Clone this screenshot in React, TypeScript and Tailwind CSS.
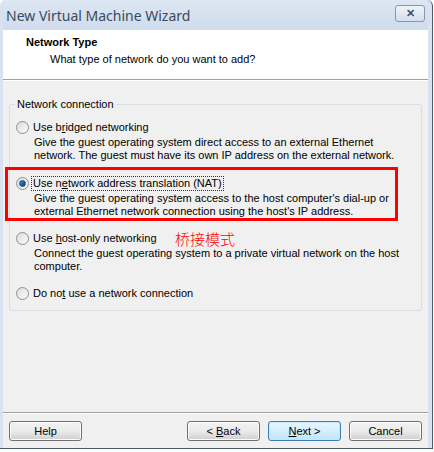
import type { ReactNode } from 'react'

const uiFont = { fontFamily: '"Liberation Sans", Arial, sans-serif' }

function Radio({ checked = false }: { checked?: boolean }) {
  return (
    <span className="flex h-[13px] w-[13px] shrink-0 items-center justify-center rounded-full border border-[#8e8f8f] bg-gradient-to-br from-[#dcdcdc] to-[#fbfbfb]">
      {checked && (
        <span className="h-[7px] w-[7px] rounded-full border border-[#1b4d7d] bg-gradient-to-br from-[#3a8fe0] to-[#0b3c6e]" />
      )}
    </span>
  )
}

function Option({
  label,
  checked,
  focused,
  lines,
}: {
  label: ReactNode
  checked?: boolean
  focused?: boolean
  lines?: string[]
}) {
  return (
    <div className="flex flex-col">
      <div className="flex h-[14px] items-center gap-[2px]">
        <Radio checked={checked} />
        <span
          className={
            focused
              ? 'whitespace-nowrap border border-dotted border-[#333] px-[1px] leading-[13px]'
              : 'whitespace-nowrap border border-transparent px-[1px] leading-[13px]'
          }
        >
          {label}
        </span>
      </div>
      {lines && (
        <div className="flex flex-col pl-[18px] pt-[2px]">
          {lines.map((line) => (
            <span key={line} className="whitespace-nowrap leading-[13px]">
              {line}
            </span>
          ))}
        </div>
      )}
    </div>
  )
}

function Button({ children, primary }: { children: ReactNode; primary?: boolean }) {
  return (
    <button
      type="button"
      className={
        primary
          ? 'flex h-[20px] w-[73px] items-center justify-center rounded-[3px] border border-[#3c7fb1] bg-gradient-to-b from-[#eaf6fd] to-[#bee6fd] text-[11px] text-black shadow-[inset_0_0_0_1px_#c5e7fa]'
          : 'flex h-[20px] w-[73px] items-center justify-center rounded-[3px] border border-[#707070] bg-gradient-to-b from-[#f2f2f2] via-[#ebebeb] to-[#cfcfcf] text-[11px] text-black shadow-[inset_0_0_0_1px_#fcfcfc]'
      }
    >
      <span className="whitespace-pre">{children}</span>
    </button>
  )
}

export default function App() {
  return (
    <div className="h-[452px] w-[434px] overflow-hidden bg-white text-[11px] text-black" style={uiFont}>
      <div className="flex h-[449px] w-[433px] flex-col rounded-t-[6px] border-r border-b border-[#4d5866] bg-[#d7e3f0] pl-[3px] pr-[4px]">
        {/* title bar */}
        <div className="flex h-[30px] shrink-0 items-center justify-between bg-gradient-to-b from-[#dce7f3] to-[#cfdcec] pl-[3px] pr-[3px]">
          <span className="text-[14px] text-[#3b4a5c]" style={{ fontFamily: '"Noto Sans", sans-serif' }}>
            New Virtual Machine Wizard
          </span>
          <span className="mb-[3px] flex h-[17px] w-[30px] items-center justify-center rounded-[3px] border border-[#8397ae] bg-gradient-to-b from-[#eef3f9] to-[#d4e0ee] text-[11px] font-bold leading-none text-[#44546a]">
            ✕
          </span>
        </div>

        {/* header */}
        <div className="flex h-[50px] shrink-0 flex-col border-b border-[#a0a0a0] bg-white pl-[23px] pt-[6px]">
          <span className="font-bold leading-[13px]">Network Type</span>
          <span className="pl-[24px] pt-[4px] leading-[13px]">What type of network do you want to add?</span>
        </div>

        {/* body */}
        <div className="flex flex-1 flex-col border-t border-white bg-[#f0f0f0] pl-[6px] pr-[6px] pt-[23px]">
          <div className="relative rounded-[3px] border border-[#d5dfe5] pb-[10px] pl-[6px] pt-[15px]">
            <span className="absolute -top-[8px] left-[5px] bg-[#f0f0f0] px-[2px] leading-[14px]">Network connection</span>
            <Option
              label={
                <>
                  Use b<span className="underline">r</span>idged networking
                </>
              }
              lines={[
                'Give the guest operating system direct access to an external Ethernet',
                'network. The guest must have its own IP address on the external network.',
              ]}
            />
            <div className="-ml-[11px] mt-[5px] w-[393px] border-[3px] border-[#ff0000] pl-[8px] pt-[6px]">
              <Option
                checked
                focused
                label={
                  <>
                    Use n<span className="underline">e</span>twork address translation (NAT)
                  </>
                }
                lines={[
                  "Give the guest operating system access to the host computer's dial-up or",
                  "external Ethernet network connection using the host's IP address.",
                ]}
              />
            </div>
            <div className="relative mt-[10px]">
              <Option
                label={
                  <>
                    Use <span className="underline">h</span>ost-only networking
                  </>
                }
                lines={['Connect the guest operating system to a private virtual network on the host', 'computer.']}
              />
              <span
                className="absolute left-[159px] top-[-1px] text-[15px] font-light leading-[18px] text-[#ff0000]"
                style={{ fontFamily: '"Noto Sans CJK SC", sans-serif' }}
              >
                桥接模式
              </span>
            </div>
            <div className="mt-[13px]">
              <Option
                label={
                  <>
                    Do no<span className="underline">t</span> use a network connection
                  </>
                }
              />
            </div>
          </div>
        </div>

        {/* footer */}
        <div className="flex h-[36px] shrink-0 flex-col bg-[#f0f0f0]">
          <div className="border-t border-[#a0a0a0]" />
          <div className="flex flex-1 items-start border-t border-white pl-[6px] pr-[6px] pt-[7px]">
            <Button>Help</Button>
            <div className="flex-1" />
            <div className="flex gap-[8px]">
              <Button>
                &lt; <span className="underline">B</span>ack
              </Button>
              <Button primary>
                <span className="underline">N</span>ext &gt;
              </Button>
              <Button>Cancel</Button>
            </div>
          </div>
        </div>
      </div>
    </div>
  )
}
